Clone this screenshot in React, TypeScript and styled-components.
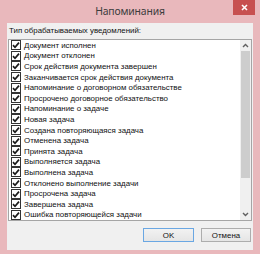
import styled, { createGlobalStyle } from "styled-components";

const GlobalStyle = createGlobalStyle`
  body {
    margin: 0;
    font-family: "Liberation Sans", Arial, sans-serif;
  }
`;

const notifications = [
  "Документ исполнен",
  "Документ отклонен",
  "Срок действия документа завершен",
  "Заканчивается срок действия документа",
  "Напоминание о договорном обязательстве",
  "Просрочено договорное обязательство",
  "Напоминание о задаче",
  "Новая задача",
  "Создана повторяющаяся задача",
  "Отменена задача",
  "Принята задача",
  "Выполняется задача",
  "Выполнена задача",
  "Отклонено выполнение задачи",
  "Просрочена задача",
  "Завершена задача",
  "Ошибка повторяющейся задачи",
];

const Window = styled.div`
  width: 260px;
  height: 254px;
  background: #e9b8bc;
  display: flex;
  flex-direction: column;
  box-sizing: border-box;
`;

const TitleBar = styled.div`
  height: 23px;
  display: grid;
  grid-template-columns: 1fr auto 1fr;
  align-items: start;
`;

const Title = styled.div`
  grid-column: 2;
  line-height: 23px;
  font-family: "Noto Sans", "Open Sans", sans-serif;
  font-size: 10.4px;
  letter-spacing: -0.15px;
  color: #3c3c3c;
`;

const CloseButton = styled.div`
  grid-column: 3;
  justify-self: end;
  margin-right: 5px;
  width: 22px;
  height: 15px;
  background: #c75050;
  display: flex;
  align-items: center;
  justify-content: center;
`;

const Client = styled.div`
  flex: 1;
  margin: 0 7px 4px 7px;
  padding: 0 1px;
  background: #f0f0f0;
  display: flex;
  flex-direction: column;
`;

const Caption = styled.div`
  height: 16px;
  line-height: 16px;
  padding-left: 1px;
  font-size: 7.9px;
  color: #111;
`;

const ListBox = styled.div`
  height: 182px;
  box-sizing: border-box;
  border: 1px solid #a5a5a5;
  background: #fff;
  display: flex;
`;

const Items = styled.div`
  flex: 1;
  padding: 0 2px;
`;

const Row = styled.label`
  height: 10.6px;
  display: flex;
  align-items: center;
  gap: 3px;
  font-size: 7.9px;
  color: #111;
  white-space: nowrap;
  overflow: hidden;
`;

const Box = styled.span`
  width: 8px;
  height: 8px;
  flex: none;
  border: 1px solid #333;
  background: #fff;
  display: flex;
  align-items: center;
  justify-content: center;
`;

const ScrollBar = styled.div`
  width: 11px;
  background: #f0f0f0;
  display: flex;
  flex-direction: column;
`;

const Arrow = styled.div`
  height: 11px;
  display: flex;
  align-items: center;
  justify-content: center;
`;

const Thumb = styled.div`
  height: 127px;
  margin: 0 1px;
  background: #cdcdcd;
`;

const Track = styled.div`
  flex: 1;
`;

const Footer = styled.div`
  display: flex;
  justify-content: flex-end;
  gap: 7px;
  padding: 7px 1px 0 0;
`;

const Button = styled.div<{ $default?: boolean }>`
  width: ${(p) => (p.$default ? 51 : 50)}px;
  height: 14px;
  box-sizing: border-box;
  border: 1px solid ${(p) => (p.$default ? "#6aa7e3" : "#adadad")};
  background: linear-gradient(#f2f2f2, #e5e5e5);
  display: flex;
  align-items: center;
  justify-content: center;
  font-size: 7.9px;
  color: #111;
`;

function Check() {
  return (
    <svg width="8" height="8" viewBox="0 0 8 8">
      <path d="M1 4.2 L3 6.3 L7 1.6" fill="none" stroke="#1a1a1a" strokeWidth="1.7" />
    </svg>
  );
}

function Chevron({ up }: { up?: boolean }) {
  return (
    <svg width="7" height="5" viewBox="0 0 7 5">
      <path
        d={up ? "M1 4 L3.5 1.5 L6 4" : "M1 1 L3.5 3.5 L6 1"}
        fill="none"
        stroke="#606060"
        strokeWidth="1.4"
      />
    </svg>
  );
}

export default function App() {
  return (
    <>
      <GlobalStyle />
      <Window>
        <TitleBar>
          <Title>Напоминания</Title>
          <CloseButton>
            <svg width="7" height="7" viewBox="0 0 7 7">
              <path d="M1 1 L6 6 M6 1 L1 6" stroke="#fff" strokeWidth="1.6" />
            </svg>
          </CloseButton>
        </TitleBar>
        <Client>
          <Caption>Тип обрабатываемых уведомлений:</Caption>
          <ListBox>
            <Items>
              {notifications.map((n) => (
                <Row key={n}>
                  <Box>
                    <Check />
                  </Box>
                  {n}
                </Row>
              ))}
            </Items>
            <ScrollBar>
              <Arrow>
                <Chevron up />
              </Arrow>
              <Thumb />
              <Track />
              <Arrow>
                <Chevron />
              </Arrow>
            </ScrollBar>
          </ListBox>
          <Footer>
            <Button $default>OK</Button>
            <Button>Отмена</Button>
          </Footer>
        </Client>
      </Window>
    </>
  );
}
